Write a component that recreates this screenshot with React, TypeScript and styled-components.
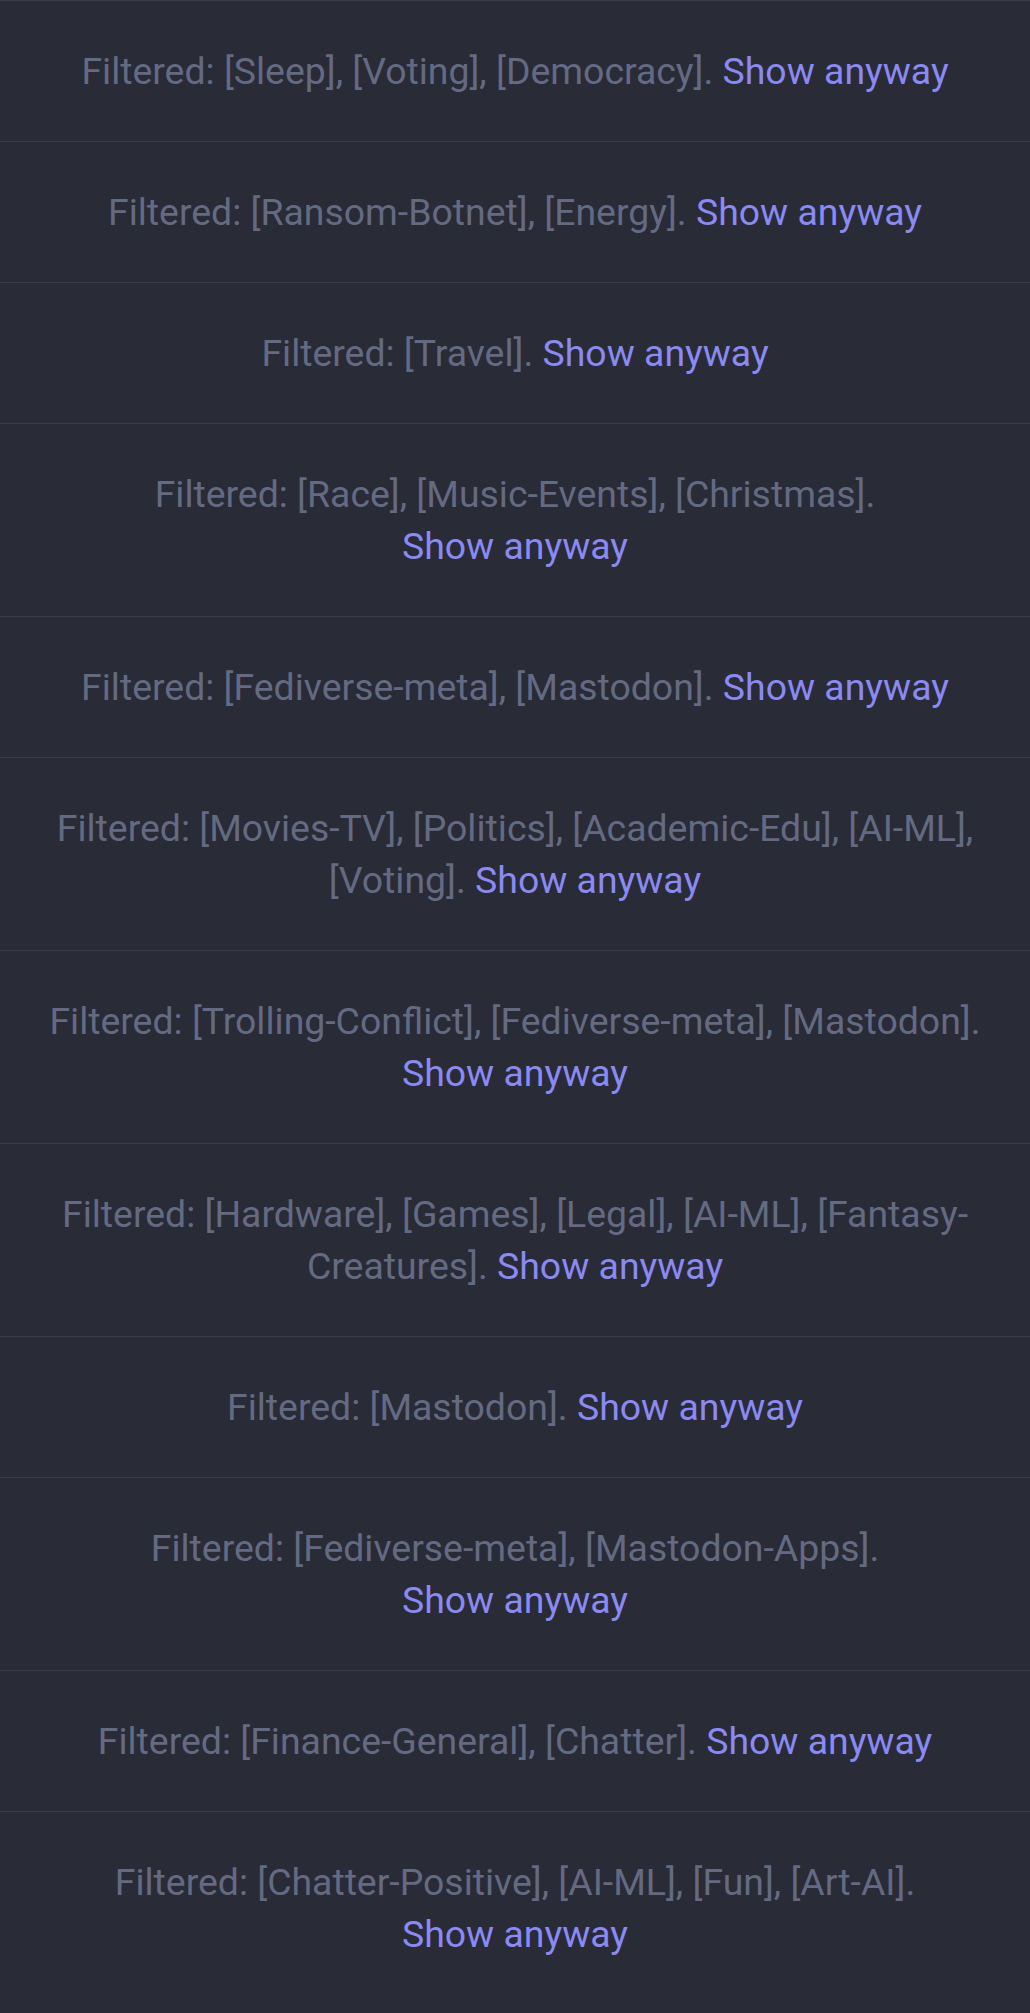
import * as React from 'react'
import styled, { createGlobalStyle } from 'styled-components'

const bgColor = '#292b37'

const GlobalStyle = createGlobalStyle`
  html, body {
    margin: 0;
    padding: 0;
    background: ${bgColor};
  }
`

const List = styled.div`
  display: flex;
  flex-direction: column;
  background: ${bgColor};
  font-family: Roboto, 'Noto Sans', sans-serif;
`

const Item = styled.div`
  border-top: 1.5px solid #3a3e4b;
  padding: 44px 44px;
  text-align: center;
  font-size: 37.4px;
  line-height: 52px;
  color: #646a82;
`

const ShowLink = styled.a`
  color: #8a8af2;
  text-decoration: none;
  white-space: nowrap;
  cursor: pointer;
`

const filtered: string[][] = [
  ['Sleep', 'Voting', 'Democracy'],
  ['Ransom-Botnet', 'Energy'],
  ['Travel'],
  ['Race', 'Music-Events', 'Christmas'],
  ['Fediverse-meta', 'Mastodon'],
  ['Movies-TV', 'Politics', 'Academic-Edu', 'AI-ML', 'Voting'],
  ['Trolling-Conflict', 'Fediverse-meta', 'Mastodon'],
  ['Hardware', 'Games', 'Legal', 'AI-ML', 'Fantasy-Creatures'],
  ['Mastodon'],
  ['Fediverse-meta', 'Mastodon-Apps'],
  ['Finance-General', 'Chatter'],
  ['Chatter-Positive', 'AI-ML', 'Fun', 'Art-AI'],
]

const App = () => (
  <>
    <GlobalStyle />
    <List>
      {filtered.map((tags, i) => (
        <Item key={i}>
          Filtered: {tags.map(t => `[${t}]`).join(', ')}. <ShowLink>Show anyway</ShowLink>
        </Item>
      ))}
    </List>
  </>
)

export default App
